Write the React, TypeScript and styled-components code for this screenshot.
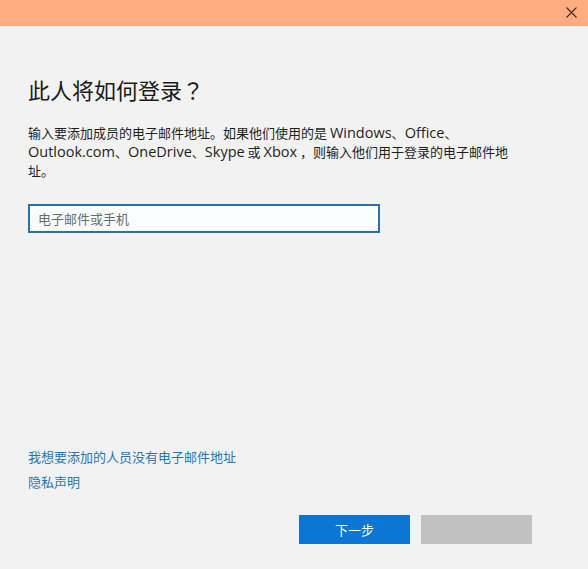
import React from "react";
import styled, { createGlobalStyle } from "styled-components";

const GlobalStyle = createGlobalStyle`
  html, body {
    margin: 0;
    padding: 0;
    background: #f2f2f2;
  }
  body {
    font-family: "Noto Sans CJK SC", sans-serif;
  }
  * {
    box-sizing: border-box;
  }
`;

const App = () => {
  return (
    <>
      <GlobalStyle />
      <Window>
        <TitleBar>
          <CloseButton aria-label="关闭">
            <svg width="11" height="11" viewBox="0 0 11 11">
              <path d="M0.5 0.5 L10.5 10.5 M10.5 0.5 L0.5 10.5" stroke="#3b2a20" strokeWidth="1.1" fill="none" />
            </svg>
          </CloseButton>
        </TitleBar>
        <Content>
          <Heading>
            此人将如何登录<Punct>？</Punct>
          </Heading>
          <Description>
            输入要添加成员的电子邮件地址。如果他们使用的是 <Term>Windows</Term>、<Term>Office</Term>、
            <br />
            <Term>Outlook.com</Term>、<Term>OneDrive</Term>、<Term>Skype</Term> 或 <Term>Xbox</Term> ，则输入他们用于登录的电子邮件地
            <br />
            址。
          </Description>
          <EmailInput placeholder="电子邮件或手机" />
          <Spacer />
          <LinkText href="#">我想要添加的人员没有电子邮件地址</LinkText>
          <LinkText href="#">隐私声明</LinkText>
          <ButtonRow>
            <Button $primary>下一步</Button>
            <Button disabled />
          </ButtonRow>
        </Content>
      </Window>
    </>
  );
};

export default App;

const Window = styled.div`
  display: flex;
  flex-direction: column;
  height: 569px;
  width: 588px;
  background: #f2f2f2;
`;

const TitleBar = styled.div`
  display: flex;
  justify-content: flex-end;
  align-items: center;
  height: 26px;
  padding-right: 10px;
  background: #ffac80;
  border-bottom: 1px solid #eaa88a;
`;

const CloseButton = styled.button`
  display: flex;
  align-items: center;
  justify-content: center;
  width: 14px;
  height: 14px;
  padding: 0;
  border: none;
  background: transparent;
`;

const Content = styled.div`
  flex: 1;
  display: flex;
  flex-direction: column;
  padding: 49px 56px 25px 28px;
`;

const Heading = styled.h1`
  margin: 0;
  font-family: "Noto Sans CJK SC", sans-serif;
  font-size: 22px;
  line-height: 29px;
  font-weight: 400;
  color: #1a1a1a;
`;

const Punct = styled.span`
  font-family: "Noto Sans CJK TC", sans-serif;
`;

const Description = styled.p`
  margin: 19px 0 0;
  font-size: 13px;
  line-height: 19px;
  color: #1e1e1e;
  white-space: nowrap;
`;

const Term = styled.span`
  font-family: "Open Sans", "Noto Sans", sans-serif;
  font-size: 14.5px;
  line-height: 19px;
`;

const EmailInput = styled.input`
  margin-top: 24px;
  width: 352px;
  height: 29px;
  padding: 0 8px;
  border: 2px solid #2b6ea9;
  background: #fbfeff;
  font-family: "Noto Sans CJK SC", sans-serif;
  font-size: 13px;
  color: #1e1e1e;
  outline: none;

  &::placeholder {
    color: #6a6a6a;
  }
`;

const Spacer = styled.div`
  flex: 1;
`;

const LinkText = styled.a`
  display: block;
  height: 25px;
  font-family: "Noto Sans CJK SC", sans-serif;
  font-size: 13px;
  line-height: 25px;
  color: #2677b3;
  text-decoration: none;
  align-self: flex-start;
`;

const ButtonRow = styled.div`
  display: flex;
  justify-content: flex-end;
  gap: 11px;
  margin-top: 21px;
`;

const Button = styled.button<{ $primary?: boolean }>`
  width: 111px;
  height: 29px;
  border: none;
  padding: 0;
  font-family: "Noto Sans CJK SC", sans-serif;
  font-size: 13px;
  color: #ffffff;
  background: ${(p) => (p.$primary ? "#0b76d3" : "#c1c1c1")};
`;
